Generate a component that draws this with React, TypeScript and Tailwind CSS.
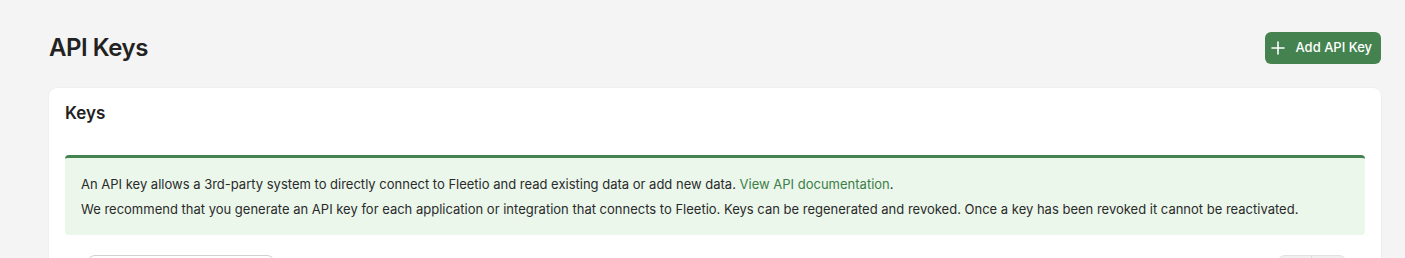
export default function App() {
  return (
    <div className="min-h-screen bg-[#f4f4f4] text-[#222] font-['Inter',sans-serif] pl-[49px] pr-[24px] pt-[32px]">
      <div className="flex items-center justify-between h-[32px]">
        <h1 className="text-[24px] font-semibold tracking-[-0.45px] text-[#222]">API Keys</h1>
        <button className="flex items-center gap-[10px] h-[32px] pl-[6px] pr-[9px] rounded-[6px] bg-[#44834f] text-white text-[13px] font-medium">
          <svg width="14" height="14" viewBox="0 0 14 14" fill="none" stroke="currentColor" strokeWidth="1.6" strokeLinecap="round">
            <path d="M7 1v12M1 7h12" />
          </svg>
          Add API Key
        </button>
      </div>

      <div className="mt-[24px] bg-white rounded-[8px] shadow-[0_0_2px_rgba(0,0,0,0.08)] px-[16px] pt-[12px]">
        <h2 className="text-[17px] font-semibold leading-[26px]">Keys</h2>

        <div className="mt-[29px] border-t-[3px] border-[#44834f] rounded-[4px] bg-[#eaf7ea] px-[16px] pt-[14px] pb-[13px] text-[13px] leading-[25px] text-[#2a2a2a]">
          <p>
            An API key allows a 3rd-party system to directly connect to Fleetio and read existing data or add new data.{' '}
            <a href="#" className="text-[#3d7d49]">View API documentation</a>.
          </p>
          <p>
            We recommend that you generate an API key for each application or integration that connects to Fleetio. Keys can be regenerated and revoked. Once a key has been revoked it cannot be reactivated.
          </p>
        </div>

        <div className="flex items-center justify-between pl-[22px] pr-[18px] pt-[20px] pb-[12px]">
          <input
            className="w-[188px] h-[32px] rounded-[8px] border border-[#d0d0d0] px-3 text-[13px]"
            placeholder=""
          />
          <div className="flex h-[32px] rounded-[8px] border border-[#e2e2e2] bg-[#f0f0f0] overflow-hidden">
            <div className="w-[34px] border-r border-[#dcdcdc]" />
            <div className="w-[34px]" />
          </div>
        </div>
      </div>
    </div>
  )
}
